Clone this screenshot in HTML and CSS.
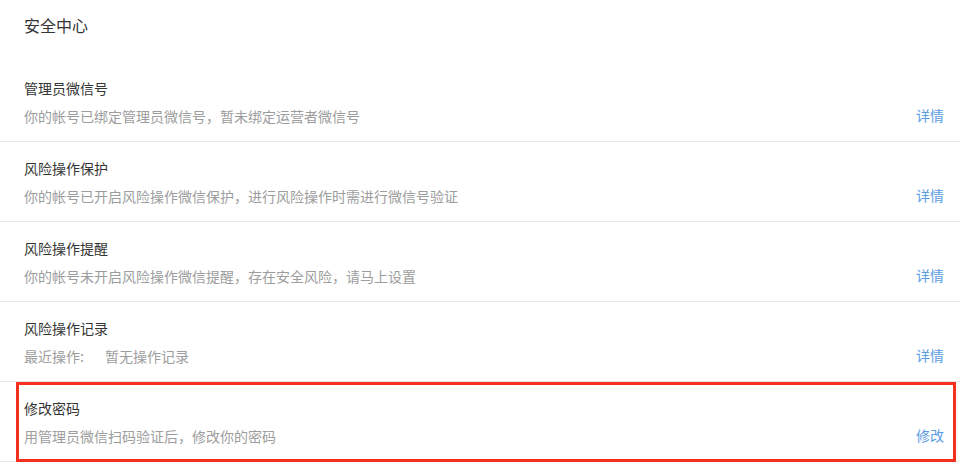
FILE: index.html
```html
<!DOCTYPE html>
<html lang="zh-CN">
<head>
    <meta charset="UTF-8">
    <meta name="viewport" content="width=device-width, initial-scale=1.0">
    <title>安全中心</title>
    <link rel="stylesheet" href="styles.css">
</head>
<body>
    <div class="page">
        <h2 class="page-title">安全中心</h2>

        <ul class="sec-list">
            <li class="sec-item">
                <div class="sec-info">
                    <h3 class="sec-name">管理员微信号</h3>
                    <p class="sec-desc">你的帐号已绑定管理员微信号，暂未绑定运营者微信号</p>
                </div>
                <a class="sec-link" href="#">详情</a>
            </li>
            <li class="sec-item">
                <div class="sec-info">
                    <h3 class="sec-name">风险操作保护</h3>
                    <p class="sec-desc">你的帐号已开启风险操作微信保护，进行风险操作时需进行微信号验证</p>
                </div>
                <a class="sec-link" href="#">详情</a>
            </li>
            <li class="sec-item">
                <div class="sec-info">
                    <h3 class="sec-name">风险操作提醒</h3>
                    <p class="sec-desc">你的帐号未开启风险操作微信提醒，存在安全风险，请马上设置</p>
                </div>
                <a class="sec-link" href="#">详情</a>
            </li>
            <li class="sec-item">
                <div class="sec-info">
                    <h3 class="sec-name">风险操作记录</h3>
                    <p class="sec-desc">最近操作:<span class="sec-record">暂无操作记录</span></p>
                </div>
                <a class="sec-link" href="#">详情</a>
            </li>
            <li class="sec-item highlight">
                <div class="sec-info">
                    <h3 class="sec-name">修改密码</h3>
                    <p class="sec-desc">用管理员微信扫码验证后，修改你的密码</p>
                </div>
                <a class="sec-link" href="#">修改</a>
            </li>
        </ul>
    </div>
</body>
</html>
```

FILE: styles.css
```css
* {
  margin: 0;
  padding: 0;
  box-sizing: border-box;
}

body {
  font-family: "Noto Sans CJK SC", "Noto Sans", sans-serif;
  background-color: #fff;
  color: #353535;
}

.page {
  width: 960px;
}

/* page heading */
.page-title {
  font-size: 16px;
  font-weight: normal;
  line-height: 22px;
  height: 62px;
  padding: 14px 0 0 24px;
  color: #353535;
}

/* rows */
.sec-list {
  list-style: none;
}

.sec-item {
  position: relative;
  display: flex;
  justify-content: space-between;
  align-items: flex-end;
  height: 80px;
  padding: 15px 16px 0 24px;
  border-bottom: 1px solid #e7e7e7;
}

.sec-info {
  display: flex;
  flex-direction: column;
  gap: 8px;
  height: 63px;
}

.sec-name {
  font-size: 14px;
  font-weight: normal;
  line-height: 20px;
  color: #353535;
}

.sec-desc {
  font-size: 14px;
  line-height: 20px;
  color: #9d9d9d;
}

.sec-record {
  margin-left: 21px;
}

.sec-link {
  font-size: 14px;
  line-height: 20px;
  margin-bottom: 16px;
  color: #5b9de3;
  text-decoration: none;
}

/* red annotation frame */
.highlight::after {
  content: "";
  position: absolute;
  left: 16px;
  right: 4px;
  top: 0;
  bottom: -1px;
  border: 3px solid #f5301e;
}
```
